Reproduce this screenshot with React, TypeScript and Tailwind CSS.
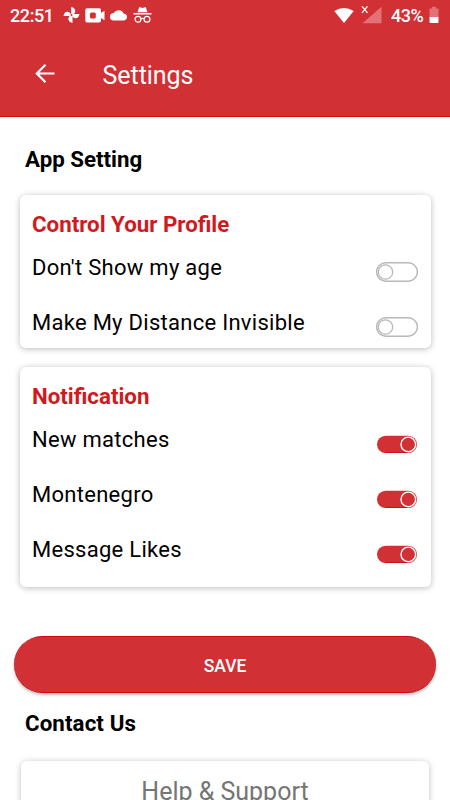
import React from "react";

function StatusBar() {
  return (
    <div className="flex h-8 items-center pl-[10px] pr-[11px] text-white">
      <span className="w-[44px] whitespace-nowrap text-[18px] font-medium leading-8 tracking-[-0.4px]">22:51</span>
      <svg className="ml-[9px] mt-[-2px] h-[16px] w-[17px]" viewBox="0 0 17 16" fill="currentColor">
        <path d="M8.200 8V0C11 .6 12.300 2.200 12.300 4c0 1.200-.5 2.200-1.400 3H16.500c-.5 2.800-2.100 4.200-3.900 4.200-1.300 0-2.300-.6-3.100-1.600V16c-2.800-.6-4.100-2.200-4.100-4 0-1.200.5-2.200 1.400-3H.5c.5-2.800 2.100-4.200 3.900-4.200C5.700 4.800 7.400 6 8.200 8z" />
        <circle cx="8.500" cy="8.100" r="1" className="fill-[#d13035]" />
      </svg>
      <svg className="ml-[5px] mt-[-1px] h-[15px] w-[20px]" viewBox="0 0 20 15">
        <path fill="currentColor" fillRule="evenodd" d="M2 .3h12.300a1.700 1.700 0 0 1 1.700 1.700v3l3.500-2.200v9.400L16 10v2.700a1.700 1.700 0 0 1-1.700 1.700H2A1.700 1.700 0 0 1 .3 12.700V2A1.700 1.700 0 0 1 2 .3zM6.500 4.500A1.500 1.500 0 0 0 5 6v3a1.500 1.500 0 0 0 1.500 1.500h2.800a1.500 1.500 0 0 0 1.500-1.500V6a1.500 1.500 0 0 0-1.500-1.500z" />
      </svg>
      <svg className="ml-[5px] mt-[-2px] h-[12px] w-[18px]" viewBox="0 0 18 12" fill="currentColor">
        <path d="M3.800 11.500A3.700 3.700 0 0 1 3.700 4 5.600 5.600 0 0 1 13.800 4.800 3.400 3.400 0 0 1 14.400 11.500z" />
      </svg>
      <svg className="ml-[5px] mt-[-2px] h-[18px] w-[19px]" viewBox="0 0 19 18">
        <path fill="currentColor" d="M6.300 1 9.500 1.900 12.700 1 14.500 6.300h-10zM.5 7h18v1.600H.5z" />
        <g fill="none" stroke="currentColor" strokeWidth="1.300">
          <circle cx="5" cy="13.200" r="2.900" />
          <circle cx="14" cy="13.200" r="2.900" />
          <path d="M7.800 12.800q1.700-1 3.400 0" />
        </g>
      </svg>
      <div className="flex-1" />
      <svg className="mt-[-2px] h-[18px] w-[50px]" viewBox="0 0 50 18">
        <path fill="currentColor" d="M1.300 5Q11-.8 20.700 5L11 17z" />
        <path className="fill-[#e27276]" d="M48.500.8V17.200H29.500z" />
        <path stroke="currentColor" strokeWidth="1.300" d="m29 .3 5.500 6.500m0-6.500L29 6.800" />
      </svg>
      <span className="ml-[8px] w-[33px] whitespace-nowrap text-[18px] font-medium leading-8 tracking-[-0.5px]">43%</span>
      <svg className="ml-[5px] mt-[-2px] h-[18px] w-[10px]" viewBox="0 0 10 18">
        <path className="fill-[#e27276]" d="M3 .8h4v1.700h2.500V11h-9V2.500H3z" />
        <path fill="currentColor" d="M.5 11h9v5a1 1 0 0 1-1 1h-7a1 1 0 0 1-1-1z" />
      </svg>
    </div>
  );
}

function Toggle({ on }: { on: boolean }) {
  if (on) {
    return (
      <svg className="mt-[9px] h-[20px] w-[42px]" viewBox="0 0 42 20">
        <rect x="1" y="1.800" width="40" height="17.200" rx="8.600" className="fill-[#d13035]" />
        <path d="M9 18.500h24" className="stroke-[#cf1018]" />
        <circle cx="32.300" cy="10.400" r="7.300" fill="none" stroke="white" strokeWidth="1.400" />
      </svg>
    );
  }
  return (
    <svg className="mt-[9px] h-[20px] w-[42px]" viewBox="0 0 42 20" fill="none">
      <rect x=".6" y=".8" width="40.800" height="18.400" rx="9.200" className="stroke-[#b8b8b8]" strokeWidth="1.400" />
      <circle cx="9.500" cy="10" r="7.200" className="stroke-[#b8b8b8]" strokeWidth="1.300" />
    </svg>
  );
}

function Row({ label, on = false }: { label: string; on?: boolean }) {
  return (
    <div className="flex h-[55px] shrink-0 items-center justify-between pt-[4px]">
      <span className="text-[22px] leading-7 tracking-[0.28px] text-black">{label}</span>
      <Toggle on={on} />
    </div>
  );
}

function Card({ title, className, children }: { title: string; className: string; children: React.ReactNode }) {
  return (
    <section
      className={`mx-[19.5px] flex flex-col rounded-[6px] bg-white px-[12.5px] pt-[15px] shadow-[0_1px_6px_rgba(0,0,0,0.27)] ${className}`}
    >
      <h3 className="text-[22.3px] font-bold leading-7 text-[#cf1a20]">{title}</h3>
      {children}
    </section>
  );
}

export default function App() {
  return (
    <div className="flex h-[800px] w-[450px] flex-col overflow-hidden bg-white font-[Roboto,sans-serif]">
      <header className="h-[117px] shrink-0 border-b border-[#cf0a10] bg-[#d13035]">
        <StatusBar />
        <div className="flex h-[84px] items-center pl-[35px] text-white">
          <svg className="h-[20px] w-[20px]" viewBox="0 0 20 20" fill="none" stroke="currentColor" strokeWidth="2.200">
            <path d="M19.500 9.500H2M10.500.8 1.800 9.500l8.700 8.700" />
          </svg>
          <h1 className="ml-[47.500px] mt-[3px] text-[25px] leading-8 tracking-[-0.05px]">Settings</h1>
        </div>
      </header>
      <h2 className="ml-[25px] mt-[28px] text-[22.3px] font-bold leading-7 text-black">App Setting</h2>
      <Card title="Control Your Profile" className="mt-[22px] h-[153px] shrink-0">
        <Row label="Don't Show my age" />
        <Row label="Make My Distance Invisible" />
      </Card>
      <Card title="Notification" className="mt-[19px] h-[220px] shrink-0">
        <Row label="New matches" on />
        <Row label="Montenegro" on />
        <Row label="Message Likes" on />
      </Card>
      <button className="mx-[14px] mt-[49px] flex h-[57px] shrink-0 items-center justify-center rounded-[29px] border-y border-[#cf0a10] bg-[#d13035] pt-[3px] text-[17.5px] font-medium text-white shadow-[0_2px_3px_rgba(0,0,0,0.25)]">
        SAVE
      </button>
      <h2 className="ml-[25px] mt-[16px] text-[22.3px] font-bold leading-7 tracking-[0.1px] text-black">Contact Us</h2>
      <section className="mx-[21px] mt-[24px] h-[80px] shrink-0 rounded-[6px] bg-white pt-[15px] text-center text-[25px] leading-8 text-[#757575] shadow-[0_1px_6px_rgba(0,0,0,0.25)]">
        Help &amp; Support
      </section>
    </div>
  );
}
